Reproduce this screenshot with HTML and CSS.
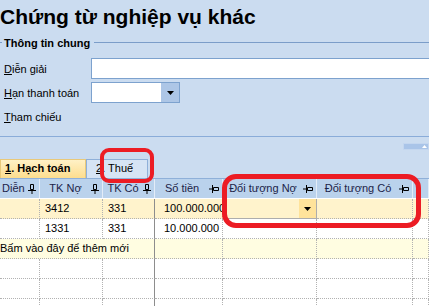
FILE: index.html
```html
<!DOCTYPE html>
<html lang="vi">
<head>
    <meta charset="UTF-8">
    <meta name="viewport" content="width=device-width, initial-scale=1.0">
    <title>Chứng từ nghiệp vụ khác</title>
    <link rel="stylesheet" href="styles.css">
</head>
<body>
    <div class="page">
        <h1 class="title">Chứng từ nghiệp vụ khác</h1>

        <div class="group-head">
            <span class="group-line short"></span>
            <span class="group-title">Thông tin chung</span>
            <span class="group-line"></span>
        </div>

        <div class="form">
            <div class="form-row">
                <label><u>D</u>iễn giải</label>
                <div class="field wide"></div>
            </div>
            <div class="form-row">
                <label><u>H</u>ạn thanh toán</label>
                <div class="field combo">
                    <span class="combo-btn">
                        <svg width="7" height="4" viewBox="0 0 7 4"><path d="M0 0h7l-3.5 4z" fill="#000"/></svg>
                    </span>
                </div>
            </div>
            <div class="form-row">
                <label><u>T</u>ham chiếu</label>
            </div>
        </div>

        <div class="splitter">
            <span class="split-btn">
                <svg width="5" height="3" viewBox="0 0 5 3"><path d="M0 3h5l-2.5-3z" fill="#fff"/></svg>
            </span>
        </div>

        <div class="tabs">
            <div class="tab active"><u>1</u>. Hạch toán</div>
            <div class="tab"><u>2</u>. Thuế</div>
        </div>

        <div class="grid">
            <div class="grid-row head">
                <div class="cell c1"><span>Diễn</span><svg class="pin" width="8" height="10" viewBox="0 0 8 10"><path d="M2.5 0.5h3v5h-3z M0 6.5h8 M4 6.5v3.5" stroke="#000" fill="none"/></svg></div>
                <div class="cell c2"><span>TK Nợ</span><svg class="pin" width="8" height="10" viewBox="0 0 8 10"><path d="M2.5 0.5h3v5h-3z M0 6.5h8 M4 6.5v3.5" stroke="#000" fill="none"/></svg></div>
                <div class="cell c3"><span>TK Có</span><svg class="pin" width="8" height="10" viewBox="0 0 8 10"><path d="M2.5 0.5h3v5h-3z M0 6.5h8 M4 6.5v3.5" stroke="#000" fill="none"/></svg></div>
                <div class="cell c4"><span>Số tiền</span><svg class="pin" width="10" height="8" viewBox="0 0 10 8"><path d="M4.5 2.5h5v3h-5z M3.5 0v8 M0 4h3.5" stroke="#000" fill="none"/></svg></div>
                <div class="cell c5"><span>Đối tượng Nợ</span><svg class="pin" width="10" height="8" viewBox="0 0 10 8"><path d="M4.5 2.5h5v3h-5z M3.5 0v8 M0 4h3.5" stroke="#000" fill="none"/></svg></div>
                <div class="cell c6"><span>Đối tượng Có</span><svg class="pin" width="10" height="8" viewBox="0 0 10 8"><path d="M4.5 2.5h5v3h-5z M3.5 0v8 M0 4h3.5" stroke="#000" fill="none"/></svg></div>
                <div class="cell c7"></div>
            </div>

            <div class="grid-row sel">
                <div class="cell c1"></div>
                <div class="cell c2">3412</div>
                <div class="cell c3">331</div>
                <div class="cell c4 num">100.000.000</div>
                <div class="cell c5 editor">
                    <span class="editor-btn">
                        <svg width="7" height="4" viewBox="0 0 7 4"><path d="M0 0h7l-3.5 4z" fill="#000"/></svg>
                    </span>
                </div>
                <div class="cell c6"></div>
                <div class="cell c7"></div>
            </div>

            <div class="grid-row">
                <div class="cell c1"></div>
                <div class="cell c2">1331</div>
                <div class="cell c3">331</div>
                <div class="cell c4 num">10.000.000</div>
                <div class="cell c5"></div>
                <div class="cell c6"></div>
                <div class="cell c7"></div>
            </div>

            <div class="grid-row new">
                <div class="cell span3">Bấm vào đây để thêm mới</div>
                <div class="cell c4"></div>
                <div class="cell c5"></div>
                <div class="cell c6"></div>
                <div class="cell c7"></div>
            </div>

            <div class="grid-row">
                <div class="cell c1"></div><div class="cell c2"></div><div class="cell c3"></div>
                <div class="cell c4"></div><div class="cell c5"></div><div class="cell c6"></div><div class="cell c7"></div>
            </div>
            <div class="grid-row">
                <div class="cell c1"></div><div class="cell c2"></div><div class="cell c3"></div>
                <div class="cell c4"></div><div class="cell c5"></div><div class="cell c6"></div><div class="cell c7"></div>
            </div>
            <div class="grid-row">
                <div class="cell c1"></div><div class="cell c2"></div><div class="cell c3"></div>
                <div class="cell c4"></div><div class="cell c5"></div><div class="cell c6"></div><div class="cell c7"></div>
            </div>
        </div>

        <div class="mark mark-tab"></div>
        <div class="mark mark-cols"></div>
    </div>
</body>
</html>
```

FILE: styles.css
```css
body {
    margin: 0;
    background-color: #cbdcf0;
    font-family: "Liberation Sans", Arial, sans-serif;
    font-size: 11px;
    color: #000;
    overflow: hidden;
}
.page {
    position: relative;
    height: 306px;
    overflow: hidden;
}
.title {
    margin: 0;
    padding-top: 5px;
    font-size: 21px;
    line-height: 24px;
    font-weight: bold;
}

/* group header */
.group-head {
    display: flex;
    align-items: center;
    height: 13px;
    margin-top: 7px;
}
.group-line {
    flex: 1;
    height: 1px;
    background-color: #7b9dc9;
}
.group-line.short {
    flex: 0 0 2px;
}
.group-title {
    font-weight: bold;
    padding: 0 4px 0 2px;
}

/* form */
.form {
    padding: 9px 0 6px;
    border-bottom: 1px solid #8aacd9;
}
.form-row {
    display: flex;
    align-items: center;
    height: 21px;
    margin-bottom: 3px;
}
.form-row label {
    flex: 0 0 87px;
    padding-left: 4px;
}
.field {
    box-sizing: border-box;
    height: 21px;
    border: 1px solid #7da2ce;
    background-color: #fff;
}
.field.wide {
    flex: 1;
    margin-right: -4px;
}
.combo {
    width: 89px;
    display: flex;
    justify-content: flex-end;
}
.combo-btn {
    width: 18px;
    background-color: #adc6e6;
    display: flex;
    align-items: center;
    justify-content: center;
}

/* splitter */
.splitter {
    height: 22px;
    display: flex;
    justify-content: flex-end;
    align-items: flex-start;
}
.split-btn {
    margin-top: 6px;
    width: 26px;
    height: 7px;
    box-sizing: border-box;
    background-color: #a9c4e8;
    border: 1px solid #c3d6ef;
    display: flex;
    justify-content: flex-end;
    align-items: center;
    padding-right: 1px;
}

/* tabs */
.tabs {
    display: flex;
    height: 19px;
}
.tab {
    box-sizing: border-box;
    height: 19px;
    line-height: 17px;
    border: 1px solid #8fb0d9;
    border-bottom: none;
    white-space: nowrap;
}
.tab.active {
    width: 86px;
    padding-left: 4px;
    border-color: #e9c97a;
    background: linear-gradient(#fff1c6, #fddd8e);
    font-weight: bold;
}
.tab:not(.active) {
    width: 62px;
    padding-left: 9px;
    background-color: #d6e4f5;
}

/* grid */
.grid {
    background-color: #fff;
}
.grid-row {
    display: flex;
    height: 20px;
}
.cell {
    box-sizing: border-box;
    flex: 0 0 auto;
    height: 20px;
    line-height: 19px;
    padding-left: 5px;
    border-right: 1px dotted #b2b2b2;
    border-bottom: 1px dotted #b2b2b2;
    white-space: nowrap;
    overflow: hidden;
}
.c1 { width: 40px; }
.c2 { width: 63px; }
.c3 { width: 52px; border-right: 1px solid #8d8d8d; }
.c4 { width: 68px; }
.c5 { width: 94px; }
.c6 { width: 96px; }
.c7 { flex: 1; }
.span3 {
    width: 155px;
    padding-left: 0;
    border-right: 1px solid #8d8d8d;
}
.num {
    padding-left: 9px;
    overflow: visible;
}

.head {
    border-top: 1px solid #8fb0d9;
}
.head .cell {
    height: 19px;
    display: flex;
    align-items: center;
    padding: 0 3px 0 0;
    background-color: #bad2ec;
    border-right: 1px solid #e3ecf8;
    border-bottom: none;
    color: #1c2348;
}
.head .cell span {
    flex: 1;
    text-align: center;
}
.head .c1 span {
    text-align: left;
    padding-left: 2px;
}

.sel .cell {
    background-color: #fff3cc;
}
.new .cell {
    background-color: #fffde1;
}
.editor {
    display: flex;
    justify-content: flex-end;
    padding: 0;
    border-right: 1px solid #adadad;
    border-bottom: 1px solid #adadad;
}
.editor-btn {
    width: 17px;
    background-color: #ffe39b;
    display: flex;
    align-items: center;
    justify-content: center;
}

/* red annotation marks */
.mark {
    position: absolute;
    box-sizing: border-box;
    border: 4px solid #ec1c24;
}
.mark-tab {
    left: 100px;
    top: 148px;
    width: 54px;
    height: 35px;
    border-radius: 9px;
}
.mark-cols {
    left: 222px;
    top: 174px;
    width: 199px;
    height: 54px;
    border-width: 5px;
    border-radius: 14px;
}
```
